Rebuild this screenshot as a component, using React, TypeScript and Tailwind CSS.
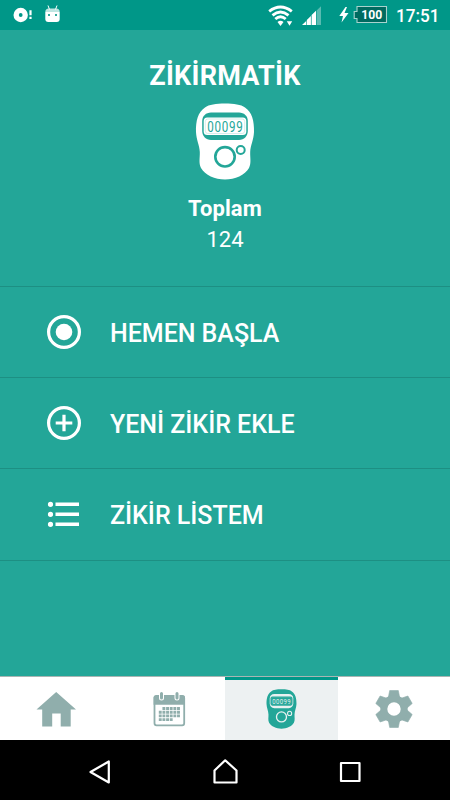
import React from 'react';

function Counter({ className, body, face }: { className: string; body: string; face: string }) {
  return (
    <svg className={className} viewBox="0 0 60 77">
      <path
        d="M30 .5C39 .5 46 1.500 50 4.500C57 9 59.300 18 59 29C58.700 37 55.500 42 55.200 49C55 55 56.500 60 54 65C50 72 40 76.500 30 76.500S10 72 6 65C3.500 60 5 55 4.800 49C4.500 42 1.300 37 1 29C.700 18 3 9 10 4.500C14 1.500 21 .5 30 .5Z"
        fill={body}
      />
      <path d="M16 9.500H44C49 9.500 52.800 13 52.800 18V28C52.800 33 49 37 44 37H16C11 37 7.200 33 7.200 28V18C7.200 13 11 9.500 16 9.500Z" fill={face} />
      <rect x="8.700" y="14.500" width="42.600" height="17.500" rx="3.500" fill={body} />
      <rect x="10.300" y="16" width="39.400" height="14.500" rx="2.500" fill="none" stroke={face} strokeOpacity=".3" strokeWidth=".6" />
      <text
        transform="translate(12.300 28.600) scale(.8 1)"
        textLength="44.500"
        lengthAdjust="spacing"
        fontFamily="Roboto, 'Liberation Sans', sans-serif"
        fontSize="14.500"
        fontWeight="400"
        fill={face}
      >
        00099
      </text>
      <circle cx="30" cy="53.800" r="9.700" fill="none" stroke={face} strokeWidth="2.600" />
      <circle cx="45.700" cy="47" r="4" fill="none" stroke={face} strokeWidth="2" />
    </svg>
  );
}

function StatusBar() {
  return (
    <header className="flex h-[30px] shrink-0 bg-[#009788]">
      <svg className="h-[30px] w-[70px]" viewBox="0 0 70 30" fill="#fff">
        <circle cx="20.700" cy="15" r="7.200" />
        <circle cx="20.700" cy="15" r="1.900" fill="#009788" />
        <path d="M29.400 10.200h2.200v5h-2.200zM29.400 16.700h2.200v2.300h-2.200z" />
        <path d="M45.300 12h14.400v7q0 3-3 3h-8.400q-3 0-3-3z" />
        <path d="M45.300 12q0-3.500 3.500-3.500h7.400q3.500 0 3.500 3.500z" opacity=".75" />
        <path d="M48 5.500l1.500 4M57 5.500l-1.500 4" stroke="#fff" strokeWidth="1" />
        <path d="M48 14h2v2h-2zM55 14h2v2h-2z" fill="#33aa9d" />
      </svg>
      <div className="grow" />
      <svg className="h-[30px] w-[190px]" viewBox="0 0 190 30">
        <g fill="none" stroke="#fff" strokeWidth="2.900">
          <path d="M9.200 11.300Q20.500 2.700 31.800 11.300" />
          <path d="M12.500 15.300Q20.500 8.800 28.500 15.300" />
          <path d="M15.300 19Q20.500 14.500 25.700 19" />
        </g>
        <path d="M17.500 22Q20.500 19.500 23.500 22L20.500 26ZM26.800 21.300H32.200L29.500 25.800Z" fill="#fff" />
        <path d="M42 25L46.200 21V25ZM46.800 25V20L50.900 16V25ZM51.600 25V15L56 10.800V25Z" fill="#fff" />
        <path d="M56.600 25V10.500L61 6.300V25Z" fill="#fff" opacity=".35" />
        <path d="M85.500 7L79.300 16H83L81.500 22.500L88.500 13H84.500L87 7Z" fill="#fff" />
        <path d="M97 6.500H126.500V22.500H97V18.500H94.200V11.500H97Z" fill="#006b60" stroke="#a9d3ce" strokeWidth="1.100" />
        <text x="101.300" y="19.300" textLength="21" lengthAdjust="spacingAndGlyphs" fontFamily="Roboto, sans-serif" fontSize="13" fontWeight="700" fill="#fff">100</text>
        <text x="136" y="22" textLength="43.500" lengthAdjust="spacingAndGlyphs" fontFamily="Roboto, sans-serif" fontSize="18" fontWeight="500" fill="#fff">17:51</text>
      </svg>
    </header>
  );
}

function MenuRow({ label, children }: { label: string; children: React.ReactNode }) {
  return (
    <button className="flex h-[91.200px] w-full shrink-0 items-center border-b border-[#1d8f83] pl-[46px] text-left">
      <svg className="h-9 w-9 shrink-0" viewBox="0 0 36 36" fill="none" stroke="#fff">
        {children}
      </svg>
      <span className="ml-7 mt-[3.400px] whitespace-nowrap text-[25px] font-medium leading-8 tracking-[-0.03px]">{label}</span>
    </button>
  );
}

const gearAngles = [0, 60, 120, 180, 240, 300];

function TabBar() {
  return (
    <nav className="grid h-16 shrink-0 grid-cols-4 border-t border-[#a9b5b3] bg-white">
      <div className="flex justify-center">
        <svg className="h-[63px] w-[50px]" viewBox="0 0 50 63" fill="#90aeac">
          <path d="M25.200 15L45 32.500H39.700V49.500H29.700V36.500H21.200V49.500H11.200V32.500H5.500Z" />
        </svg>
      </div>
      <div className="flex justify-center">
        <svg className="h-[63px] w-[50px]" viewBox="0 0 50 63">
          <rect x="10.500" y="19" width="29.700" height="29.300" rx="2" fill="none" stroke="#90aeac" strokeWidth="1.800" />
          <path d="M9.600 27.800V20.500q0-2 2-2H39q2 0 2 2v7.300Z" fill="#90aeac" />
          <path d="M17.500 16.500V21M33 16.500V21" stroke="#fff" strokeWidth="5" strokeLinecap="round" />
          <path d="M17.500 16.500V21M33 16.500V21" stroke="#90aeac" strokeWidth="3" strokeLinecap="round" />
          <g stroke="#90aeac" strokeWidth="2.900" strokeDasharray="2.900 .75">
            <path d="M18.450 31.500H36" />
            <path d="M14.800 35.200H36M14.800 38.900H36" />
            <path d="M14.800 42.600H28.800" />
          </g>
        </svg>
      </div>
      <div className="flex justify-center border-t-[3px] border-[#009788] bg-[#edf1f2] pt-[9px]">
        <Counter className="h-10 w-[31px]" body="#23a698" face="#e8f1f1" />
      </div>
      <div className="flex items-center justify-center">
        <svg className="mt-[1px] h-10 w-10" viewBox="-20 -20 40 40" fill="#90aeac">
          {gearAngles.map((angle) => (
            <path key={angle} d="M-4.300 -18.500H4.300L5.800 -11H-5.800Z" stroke="#90aeac" strokeWidth=".6" strokeLinejoin="round" transform={`rotate(${angle})`} />
          ))}
          <circle r="10.200" fill="none" stroke="#90aeac" strokeWidth="7" />
        </svg>
      </div>
    </nav>
  );
}

export default function App() {
  return (
    <div className="flex h-[800px] w-[450px] flex-col overflow-hidden bg-[#23a698] font-[Roboto,sans-serif] text-white">
      <StatusBar />
      <section className="flex h-[257px] shrink-0 flex-col items-center border-b border-[#1d8f83] pt-[30px]">
        <h1 className="text-[27px] font-bold leading-8 tracking-[0.25px]">ZİKİRMATİK</h1>
        <Counter className="mt-[11px] h-[77px] w-[60px]" body="#fff" face="#23a698" />
        <p className="mt-[14px] text-[22px] font-bold leading-[30px] tracking-[0.1px]">Toplam</p>
        <p className="pt-px text-[22px] leading-[30px]">124</p>
      </section>
      <main className="flex grow flex-col">
        <MenuRow label="HEMEN BAŞLA">
          <circle cx="18" cy="18" r="15.400" strokeWidth="3.200" />
          <circle cx="18" cy="18" r="8.300" fill="#fff" stroke="none" />
        </MenuRow>
        <MenuRow label="YENİ ZİKİR EKLE">
          <circle cx="18" cy="18" r="15.400" strokeWidth="3.200" />
          <path d="M9.700 18H26.300M18 9.700V26.300" strokeWidth="3.200" />
        </MenuRow>
        <MenuRow label="ZİKİR LİSTEM">
          <path d="M9.500 8.300H33M9.500 18.300H33M9.500 28.300H33" strokeWidth="3.600" />
          <path d="M4.500 8.300h.01M4.500 18.300h.01M4.500 28.300h.01" strokeWidth="5.200" strokeLinecap="round" />
        </MenuRow>
      </main>
      <TabBar />
      <footer className="h-[60px] shrink-0 bg-black">
        <svg className="h-[60px] w-[450px]" viewBox="0 0 450 60" fill="none" stroke="#fff" strokeWidth="2.200" strokeLinejoin="round">
          <path d="M90.500 32L108.800 21.500V42.500Z" />
          <path d="M225.200 20.300L236.500 30.500V42.500H214.500V30.500Z" />
          <path d="M341 23H359.500V41H341Z" />
        </svg>
      </footer>
    </div>
  );
}
